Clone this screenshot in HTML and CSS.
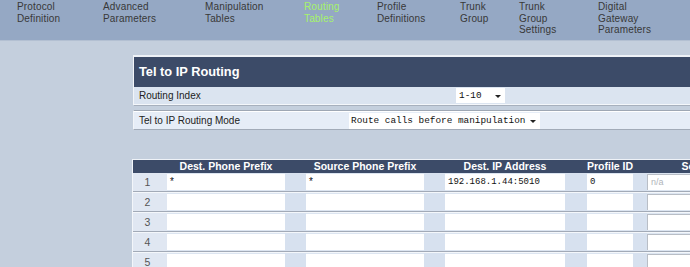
FILE: index.html
```html
<!DOCTYPE html>
<html>
<head>
<meta charset="utf-8">
<link rel="stylesheet" href="styles.css">
</head>
<body>
<div class="nav">
  <div class="nav-item w1">Protocol<br>Definition</div>
  <div class="nav-item w2">Advanced<br>Parameters</div>
  <div class="nav-item w3">Manipulation<br>Tables</div>
  <div class="nav-item w4 active">Routing<br>Tables</div>
  <div class="nav-item w5">Profile<br>Definitions</div>
  <div class="nav-item w6">Trunk<br>Group</div>
  <div class="nav-item w7">Trunk<br>Group<br>Settings</div>
  <div class="nav-item w8">Digital<br>Gateway<br>Parameters</div>
</div>

<div class="panel">
  <div class="panel-title">Tel to IP Routing</div>
  <div class="index-row">
    <div class="index-label">Routing Index</div>
    <div class="sel sel-index"><span>1-10</span><i class="arrow"></i></div>
  </div>
</div>

<div class="mode-box">
  <div class="mode-row">
    <div class="mode-label">Tel to IP Routing Mode</div>
    <div class="sel sel-mode"><span>Route calls before manipulation</span><i class="arrow"></i></div>
  </div>
</div>

<div class="grid">
  <div class="grow ghead">
    <div class="c-idx"></div>
    <div class="c-in1 hl">Dest. Phone Prefix</div><div class="c-gap"></div>
    <div class="c-in2 hl">Source Phone Prefix</div><div class="c-gap"></div>
    <div class="c-in3 hl">Dest. IP Address</div><div class="c-gap2"></div>
    <div class="c-in4 hl">Profile ID</div><div class="c-gap3"></div>
    <div class="c-in5 hl">Source IP Address</div>
  </div>
  <div class="grow">
    <div class="c-idx num">1</div>
    <div class="c-in1 inp">*</div><div class="c-gap"></div>
    <div class="c-in2 inp">*</div><div class="c-gap"></div>
    <div class="c-in3 inp mono">192.168.1.44:5010</div><div class="c-gap2"></div>
    <div class="c-in4 inp mono">0</div><div class="c-gap3"></div>
    <div class="c-in5 inp bordered dis">n/a</div>
  </div>
  <div class="grow">
    <div class="c-idx num">2</div>
    <div class="c-in1 inp"></div><div class="c-gap"></div>
    <div class="c-in2 inp"></div><div class="c-gap"></div>
    <div class="c-in3 inp"></div><div class="c-gap2"></div>
    <div class="c-in4 inp"></div><div class="c-gap3"></div>
    <div class="c-in5 inp bordered"></div>
  </div>
  <div class="grow">
    <div class="c-idx num">3</div>
    <div class="c-in1 inp"></div><div class="c-gap"></div>
    <div class="c-in2 inp"></div><div class="c-gap"></div>
    <div class="c-in3 inp"></div><div class="c-gap2"></div>
    <div class="c-in4 inp"></div><div class="c-gap3"></div>
    <div class="c-in5 inp bordered"></div>
  </div>
  <div class="grow">
    <div class="c-idx num">4</div>
    <div class="c-in1 inp"></div><div class="c-gap"></div>
    <div class="c-in2 inp"></div><div class="c-gap"></div>
    <div class="c-in3 inp"></div><div class="c-gap2"></div>
    <div class="c-in4 inp"></div><div class="c-gap3"></div>
    <div class="c-in5 inp bordered"></div>
  </div>
  <div class="grow">
    <div class="c-idx num">5</div>
    <div class="c-in1 inp"></div><div class="c-gap"></div>
    <div class="c-in2 inp"></div><div class="c-gap"></div>
    <div class="c-in3 inp"></div><div class="c-gap2"></div>
    <div class="c-in4 inp"></div><div class="c-gap3"></div>
    <div class="c-in5 inp bordered"></div>
  </div>
</div>
</body>
</html>
```

FILE: styles.css
```css
html, body {
  margin: 0;
  padding: 0;
  overflow: hidden;
}
body {
  width: 690px;
  height: 267px;
  background: #c4cfdd;
  font-family: "Liberation Sans", Arial, sans-serif;
}

/* top navigation */
.nav {
  display: flex;
  height: 40px;
  padding-left: 17px;
  background: #95a8c4;
  border-bottom: 1px solid #b3c0d2;
}
.nav-item {
  flex: none;
  font-size: 10px;
  line-height: 11.7px;
  color: #383838;
  padding-top: 1px;
  letter-spacing: 0.15px;
}
.nav-item.active { color: #a6f36a; }
.w1 { width: 86px; }
.w2 { width: 102px; }
.w3 { width: 99px; }
.w4 { width: 73px; }
.w5 { width: 83px; }
.w6 { width: 59px; }
.w7 { width: 79px; }
.w8 { width: 90px; }

/* first panel */
.panel {
  margin: 14px 0 0 133px;
  width: 620px;
  border-top: 2px solid #eef2f7;
  border-left: 1px solid #f2f5f9;
}
.panel-title {
  height: 30px;
  line-height: 30px;
  background: #3c4b68;
  color: #ffffff;
  font-weight: bold;
  font-size: 12.8px;
  padding-left: 5px;
}
.index-row {
  display: flex;
  align-items: center;
  height: 17px;
  background: #dbe4f0;
  border-bottom: 1px solid #f4f7fb;
  box-shadow: 0 1px 0 #a7b0bd;
}
.index-label {
  width: 317px;
  padding-left: 5px;
  font-size: 10px;
  color: #222;
}

/* select lookalikes */
.sel {
  display: flex;
  align-items: center;
  justify-content: space-between;
  height: 15px;
  background: #ffffff;
  font-family: "Liberation Mono", "DejaVu Sans Mono", monospace;
  font-size: 9.4px;
  color: #111;
  box-sizing: border-box;
  padding: 0 4px 0 3px;
}
.sel-index { width: 49px; }
.sel-mode { width: 191px; height: 16px; padding-left: 2px; }
.arrow {
  width: 0;
  height: 0;
  border-left: 3px solid transparent;
  border-right: 3px solid transparent;
  border-top: 3px solid #222;
  margin-top: 1px;
}

/* second panel */
.mode-box {
  margin: 5px 0 0 133px;
  width: 620px;
  border-top: 1px solid #9ea7b4;
  border-bottom: 1px solid #a2abb8;
  border-left: 1px solid #f2f5f9;
}
.mode-row {
  display: flex;
  align-items: center;
  height: 17px;
  border-top: 1px solid #ffffff;
  background: #e6edf7;
}
.mode-label {
  width: 210px;
  padding-left: 5px;
  font-size: 10px;
  color: #222;
}

/* table grid */
.grid {
  margin: 29px 0 0 132px;
  width: 720px;
  border-top: 1px solid #eef2f7;
  border-left: 1px solid #f3f6fa;
}
.grow {
  display: grid;
  grid-template-columns: 34px 118px 21px 118px 21px 120px 22px 46px 14px 162px;
  height: 18px;
  background: #dce5f1;
  border-bottom: 1px solid #a2aab7;
  box-shadow: 0 1px 0 #f4f7fb;
  margin-bottom: 1px;
}
.grow.ghead {
  height: 13px;
  background: #3c4b68;
  border-bottom: none;
  box-shadow: none;
  margin-bottom: 0;
}
.hl {
  color: #ffffff;
  font-weight: bold;
  font-size: 10.5px;
  line-height: 13px;
  text-align: center;
  white-space: nowrap;
}
.c-gap, .c-gap2, .c-gap3 { background: #d7e1ef; }
.ghead .c-gap, .ghead .c-gap2, .ghead .c-gap3 { background: transparent; }
.num {
  background: #e0e7f2;
  font-size: 10.5px;
  color: #555;
  text-align: center;
  line-height: 18px;
  padding-right: 5px;
}
.inp {
  background: #ffffff;
  margin: 1px 0 1px 0;
  font-size: 10px;
  line-height: 16px;
  padding-left: 3px;
  color: #111;
  box-sizing: border-box;
}
.inp.mono {
  font-family: "Liberation Mono", "DejaVu Sans Mono", monospace;
  font-size: 9px;
}
.inp.bordered {
  border-top: 1px solid #b9bec6;
  border-left: 1px solid #b9bec6;
}
.inp.dis {
  color: #b0b4ba;
  font-size: 9px;
  line-height: 15px;
}
```
